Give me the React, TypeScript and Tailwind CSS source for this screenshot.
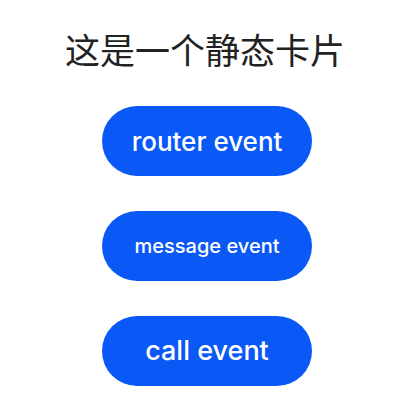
import React from 'react'

const buttons = [
  { label: 'router event', size: 'text-[26px]' },
  { label: 'message event', size: 'text-[20px]' },
  { label: 'call event', size: 'text-[27px]' },
]

const App = () => {
  return (
    <div className="w-[410px] h-[410px] bg-white flex flex-col items-center font-['Noto_Sans','Noto_Sans_CJK_SC',sans-serif]">
      <h1 className="mt-[29px] text-[35px] leading-[40px] font-normal text-[#222222] font-['Noto_Sans_CJK_SC',sans-serif]">
        这是一个静态卡片
      </h1>
      <div className="mt-[37px] ml-[4px] flex flex-col items-center gap-[35px]">
        {buttons.map((b) => (
          <button
            key={b.label}
            className={`w-[210px] h-[70px] rounded-full bg-[#0A59F7] text-white font-medium ${b.size} font-['Inter','Noto_Sans',sans-serif] flex items-center justify-center`}
          >
            {b.label}
          </button>
        ))}
      </div>
    </div>
  )
}

export default App
